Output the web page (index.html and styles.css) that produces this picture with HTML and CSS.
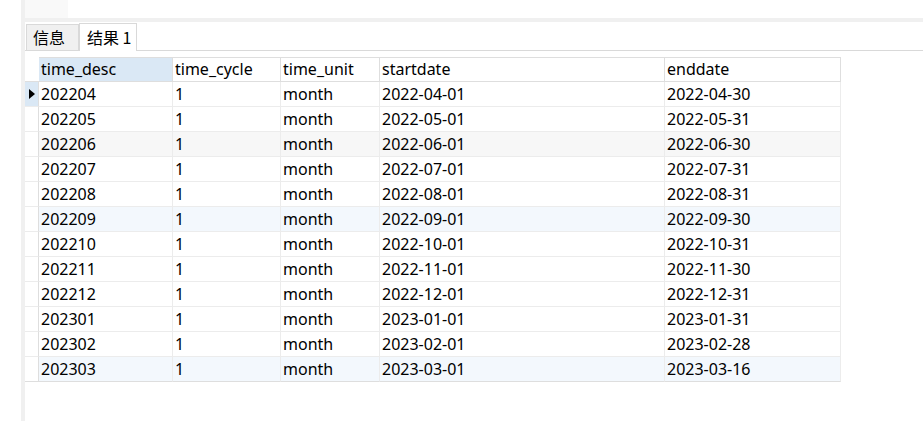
FILE: index.html
```html
<!DOCTYPE html>
<html>
<head>
<meta charset="utf-8">
<link rel="stylesheet" href="styles.css">
</head>
<body>
<div class="gutter"></div>
<div class="bar"></div>
<div class="main">
  <div class="top"><div class="topbox"></div></div>
  <div class="band"></div>
  <div class="tabs">
    <div class="tab">信息</div>
    <div class="tab active">结果 1</div>
  </div>
  <div class="grid">
    <div class="row head">
      <div class="ind"></div>
      <div class="cell sel">time_desc</div>
      <div class="cell">time_cycle</div>
      <div class="cell">time_unit</div>
      <div class="cell">startdate</div>
      <div class="cell">enddate</div>
    </div>
    <div class="row cur"><div class="ind"><span class="arrow"></span></div><div class="cell">202204</div><div class="cell">1</div><div class="cell">month</div><div class="cell">2022-04-01</div><div class="cell">2022-04-30</div></div>
    <div class="row"><div class="ind"></div><div class="cell">202205</div><div class="cell">1</div><div class="cell">month</div><div class="cell">2022-05-01</div><div class="cell">2022-05-31</div></div>
    <div class="row grey"><div class="ind"></div><div class="cell">202206</div><div class="cell">1</div><div class="cell">month</div><div class="cell">2022-06-01</div><div class="cell">2022-06-30</div></div>
    <div class="row"><div class="ind"></div><div class="cell">202207</div><div class="cell">1</div><div class="cell">month</div><div class="cell">2022-07-01</div><div class="cell">2022-07-31</div></div>
    <div class="row"><div class="ind"></div><div class="cell">202208</div><div class="cell">1</div><div class="cell">month</div><div class="cell">2022-08-01</div><div class="cell">2022-08-31</div></div>
    <div class="row blue"><div class="ind"></div><div class="cell">202209</div><div class="cell">1</div><div class="cell">month</div><div class="cell">2022-09-01</div><div class="cell">2022-09-30</div></div>
    <div class="row"><div class="ind"></div><div class="cell">202210</div><div class="cell">1</div><div class="cell">month</div><div class="cell">2022-10-01</div><div class="cell">2022-10-31</div></div>
    <div class="row"><div class="ind"></div><div class="cell">202211</div><div class="cell">1</div><div class="cell">month</div><div class="cell">2022-11-01</div><div class="cell">2022-11-30</div></div>
    <div class="row"><div class="ind"></div><div class="cell">202212</div><div class="cell">1</div><div class="cell">month</div><div class="cell">2022-12-01</div><div class="cell">2022-12-31</div></div>
    <div class="row"><div class="ind"></div><div class="cell">202301</div><div class="cell">1</div><div class="cell">month</div><div class="cell">2023-01-01</div><div class="cell">2023-01-31</div></div>
    <div class="row"><div class="ind"></div><div class="cell">202302</div><div class="cell">1</div><div class="cell">month</div><div class="cell">2023-02-01</div><div class="cell">2023-02-28</div></div>
    <div class="row blue last"><div class="ind"></div><div class="cell">202303</div><div class="cell">1</div><div class="cell">month</div><div class="cell">2023-03-01</div><div class="cell">2023-03-16</div></div>
  </div>
</div>
</body>
</html>
```
FILE: styles.css
```css
html, body {
  margin: 0;
  padding: 0;
  background: #fff;
}
body {
  display: flex;
  height: 421px;
  overflow: hidden;
  font-family: "Noto Sans", "Noto Sans CJK SC", sans-serif;
  font-size: 16px;
  color: #000;
}
.gutter {
  width: 21px;
  flex: none;
}
.bar {
  width: 4px;
  flex: none;
  background: #f0f0f0;
}
.main {
  flex: 1;
  display: flex;
  flex-direction: column;
}
.top {
  height: 18px;
}
.topbox {
  width: 43px;
  height: 18px;
  background: #f9f9f9;
}
.band {
  height: 4px;
  background: #f0f0f0;
}
.tabs {
  height: 28px;
  display: flex;
  align-items: flex-end;
  padding-left: 1px;
  border-bottom: 1px solid #d9d9d9;
}
.tab {
  box-sizing: border-box;
  height: 26px;
  width: 53px;
  background: #f0f0f0;
  border: 1px solid #d9d9d9;
  border-bottom: none;
  font-family: "Noto Sans CJK SC", sans-serif;
  font-size: 16px;
  line-height: 24px;
  padding-left: 6px;
}
.tab.active {
  height: 28px;
  width: 58px;
  background: #fff;
  margin-bottom: -1px;
  padding-left: 7px;
  line-height: 27px;
  white-space: nowrap;
}
.grid {
  margin-top: 6px;
  width: 816px;
}
.row {
  display: grid;
  grid-template-columns: 14px 134px 108px 99px 285px 176px;
  height: 25px;
}
.row > div {
  box-sizing: border-box;
  border-bottom: 1px solid #ececec;
}
.ind {
  border-right: 1px solid #dedede;
}
.cell {
  border-right: 1px solid #ececec;
  padding-left: 2px;
  line-height: 24px;
  white-space: nowrap;
  overflow: hidden;
}
.head > div {
  border-top: 1px solid #dedede;
  border-bottom: 1px solid #dedede;
  border-right-color: #dedede;
}
.head .cell {
  line-height: 22px;
}
.head .ind {
  border-top: none;
  border-right: none;
}
.head .sel {
  background: #dae8f5;
}
.cur .ind {
  background: #dae8f5;
  display: flex;
  align-items: center;
  justify-content: center;
}
.arrow {
  width: 0;
  height: 0;
  border-top: 5px solid transparent;
  border-bottom: 5px solid transparent;
  border-left: 6px solid #000;
}
.grey > .cell {
  background: #f7f7f7;
}
.blue > .cell {
  background: #f3f8fd;
}
.last > div {
  border-bottom: 1px solid #dedede;
}
```
